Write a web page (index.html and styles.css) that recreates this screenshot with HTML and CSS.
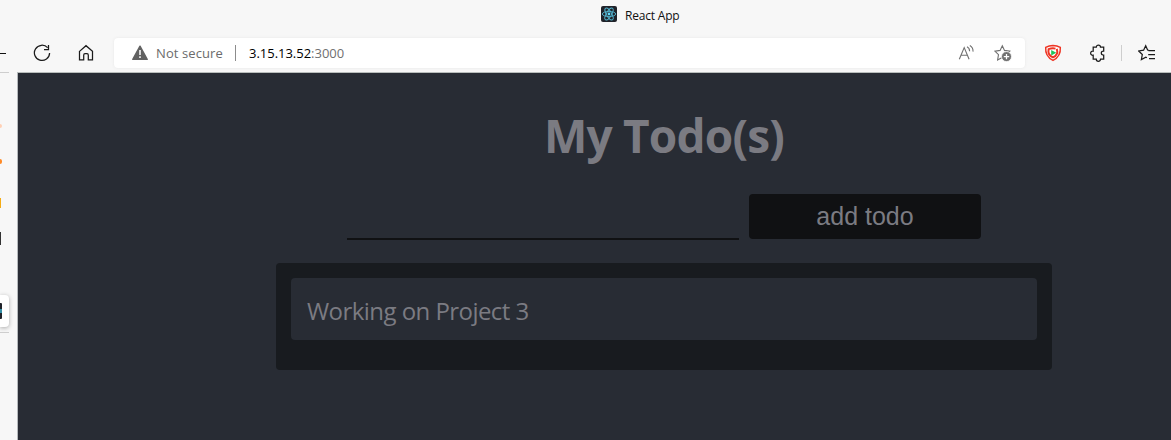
FILE: index.html
```html
<!DOCTYPE html>
<html lang="en">
<head>
<meta charset="utf-8">
<title>React App</title>
<link rel="stylesheet" href="styles.css">
</head>
<body>
<header class="titlebar">
  <svg class="favicon" viewBox="0 0 16 16"><rect width="16" height="16" rx="2" fill="#20232a"/><g fill="none" stroke="#53b5d0" stroke-width=".9"><ellipse cx="8" cy="8" rx="6.7" ry="2.6"/><ellipse cx="8" cy="8" rx="6.7" ry="2.6" transform="rotate(60 8 8)"/><ellipse cx="8" cy="8" rx="6.7" ry="2.6" transform="rotate(120 8 8)"/></g><circle cx="8" cy="8" r="1.4" fill="#61dafb"/></svg>
  <span class="tab-title">React App</span>
</header>
<nav class="toolbar">
  <span class="back"></span>
  <svg class="icon reload" viewBox="0 0 18 18"><path d="M14.6 3.7A7.6 7.6 0 1 0 16.6 9M15.5 1v4.5H11"/></svg>
  <svg class="icon home" viewBox="0 0 18 18"><path d="M2.5 7.4 9 1.7l6.5 5.7v8.4h-4.2v-4.6c0-1-.5-1.5-1.3-1.5H8c-.8 0-1.3.5-1.3 1.5v4.6H2.5z"/></svg>
  <div class="address">
    <svg class="warning" viewBox="0 0 16 16"><path d="M8 1.2 15.2 14.4H.8z" fill="#616161" stroke="#616161" stroke-width="1.4" stroke-linejoin="round"/><path d="M8 5v5M8 11.3v1.6" stroke="#fff" stroke-width="1.5"/></svg>
    <span class="insecure">Not secure</span>
    <span class="rule"></span>
    <span class="url">3.15.13.52<span class="port">:3000</span></span>
    <svg class="read" viewBox="0 0 18 18"><path d="M1.3 15.3 6.2 3.6l4.9 11.7M2.9 11.3h6.6M9 2.8q2.7 1.4 2.6 4.5M11.8 1.5q3.5 2 3.2 6.1"/></svg>
    <svg class="fav" viewBox="0 0 18 18"><path d="m8.3 1.8 2.2 4.6 5.3.8-3.9 3.7.9 5-4.5-2.5-4.7 2.5.9-5.2L.9 7.2l5.2-.8z"/><circle cx="12.5" cy="12.6" r="5" fill="#707070" stroke="#fff" stroke-width=".8"/><path d="M12.5 9.9v5.4M9.8 12.6h5.4" stroke="#fff" stroke-width="1.3"/></svg>
  </div>
  <svg class="icon shield" viewBox="0 0 18 18"><path d="M9 1.4Q13 1.5 16.3 3.4 17 12.5 9 16.4 1 12.5 1.7 3.4 5 1.5 9 1.4z" fill="#fff" stroke="#ee3524" stroke-width="1.5"/><path d="M12.8 4.9Q14.8 10.8 9 13.4 3.4 10.8 4.6 5.2 8 3.8 11.5 4.6" stroke="#ee3524" stroke-width="2"/><path d="m7.2 6 5.1 2.7-5.1 2.8z" fill="#1fc45a" stroke="none"/></svg>
  <svg class="icon puzzle" viewBox="0 0 18 18"><path d="M4.2 3.2h3.1a2.1 2.1 0 0 1 4.2 0h3.2v4h-.5a1.9 1.9 0 0 0 0 3.8h.5v4.2h-3.2a2.1 2.1 0 0 1-4.2 0H4.2v-4a2.1 2.1 0 1 1 0-4.1z"/></svg>
  <span class="divider"></span>
  <svg class="icon list" viewBox="0 0 18 18"><path d="M11 6.3 9.6 6 7.7 1.8 5.6 6.2l-4.9.8 3.6 3.5-.9 5 4.4-2.4 1.1.6M10.5 6.5H17M10.2 10.5H17M11 14.5H17"/></svg>
</nav>
<div class="browser">
  <aside class="tabs">
    <span class="mark peach"></span>
    <span class="mark orange"></span>
    <span class="mark gold"></span>
    <span class="mark dark"></span>
    <span class="active"><span class="active-icon"></span></span>
    <span class="tabs-end"></span>
  </aside>
  <div class="viewport">
    <main class="app">
      <h1 class="heading">My Todo(s)</h1>
      <form class="form"><input class="field" type="text" aria-label="Todo"><button class="add" type="button">add todo</button></form>
      <ul class="todos"><li class="todo"><span class="todo-text">Working on Project 3</span></li></ul>
    </main>
  </div>
</div>
</body>
</html>
```

FILE: styles.css
```css
* { box-sizing: border-box; }
body {
  margin: 0;
  width: 1171px;
  height: 440px;
  overflow: hidden;
  display: flex;
  flex-direction: column;
  background: #f7f7f7;
  font-family: "Open Sans", "Noto Sans", sans-serif;
}
svg { display: block; flex: none; fill: none; }
.titlebar { height: 34px; flex: none; display: flex; align-items: flex-start; padding: 6px 0 0 601px; background: #f7f7f7; }
.favicon { width: 16px; height: 16px; }
.tab-title { margin-left: 8px; font-size: 12px; line-height: 19px; color: #111; letter-spacing: -.2px; white-space: nowrap; }
.toolbar { height: 38px; flex: none; display: flex; align-items: center; }
.back { width: 6px; height: 1px; background: #111; }
.icon { width: 18px; height: 18px; stroke: #1b1b1b; stroke-width: 1.25; }
.reload { margin-left: 27px; }
.home { margin-left: 26px; }
.address { width: 911px; height: 30px; margin-left: 19px; padding-left: 18px; display: flex; align-items: center; background: #fff; border-radius: 4px; box-shadow: 0 0 3px #e6e6e6; }
.warning { width: 16px; height: 16px; }
.insecure { width: 68px; margin-left: 8px; font-size: 13px; letter-spacing: .1px; color: #6b6b6b; white-space: nowrap; }
.rule { width: 1px; height: 16px; margin-left: 11px; background: #8c8c8c; }
.url { width: 100px; margin-left: 13px; font-size: 13px; color: #000; letter-spacing: -.02px; white-space: nowrap; }
.port { color: #707070; }
.read { width: 18px; height: 18px; margin-left: 609px; stroke: #707070; stroke-width: 1.1; }
.fav { width: 18px; height: 18px; margin-left: 18px; stroke: #707070; stroke-width: 1.1; }
.shield { margin-left: 19px; }
.puzzle { margin-left: 27px; }
.divider { width: 1px; height: 16px; margin-left: 14px; background: #cecece; }
.list { margin-left: 16px; }
.browser { flex: 1; display: flex; min-height: 0; }
.tabs { width: 17px; flex: none; display: flex; flex-direction: column; align-items: flex-start; }
.tabs::before { content: ""; width: 9px; height: 1px; background: #cecece; }
.mark { flex: none; }
.peach { width: 2px; height: 4px; margin-top: 51px; background: #ffd0b5; border-radius: 0 2px 2px 0; }
.orange { width: 2px; height: 5px; margin-top: 31px; background: #ff8a26; border-radius: 0 2px 2px 0; }
.gold { width: 1px; height: 10px; margin-top: 34px; background: #f5ac14; }
.dark { width: 1px; height: 13px; margin-top: 24px; background: #333; }
.active { width: 9px; height: 32px; margin-top: 50px; padding-top: 8px; background: #fff; border-radius: 0 4px 4px 0; box-shadow: 0 1px 4px #aaa; }
.active-icon { display: block; width: 2px; height: 16px; background: linear-gradient(#20232a 40%, #348fa7 40% 60%, #20232a 60%); border-radius: 0 1px 1px 0; }
.tabs-end { width: 9px; height: 1px; margin-top: 5px; background: #cecece; }
.viewport { flex: 1; min-width: 0; overflow: hidden; background: #282c34; border-top: 1px solid #b9bebc; border-left: 1px solid #b5b9bc; }
.app { width: 1292px; display: flex; flex-direction: column; align-items: center; color: #7b7b82; }
.heading { margin: 29px 0 0; height: 66px; font-size: 46px; line-height: 66px; font-weight: 700; letter-spacing: -.8px; white-space: nowrap; }
.form { display: flex; gap: 10px; margin: 26px 0 0; height: 46px; }
.field { width: 392px; height: 46px; padding: 8px; background: transparent; border: 0; border-bottom: 2px solid #101113; border-radius: 0; outline: none; color: #7b7b82; font-size: 24px; }
.add { width: 232px; height: 45px; padding: 0; border: 0; border-radius: 4px; background: #101113; color: #7b7b82; font: 25px/45px "Liberation Sans", Arial, sans-serif; }
.todos { width: 776px; height: 107px; margin: 23px 0 0; padding: 15px; list-style: none; background: #181b1f; border-radius: 4px; }
.todo { height: 62px; padding: 0 16px; background: #282c34; border-radius: 4px; font-size: 24px; line-height: 65px; }
.todo-text { white-space: nowrap; letter-spacing: -.55px; }
```
